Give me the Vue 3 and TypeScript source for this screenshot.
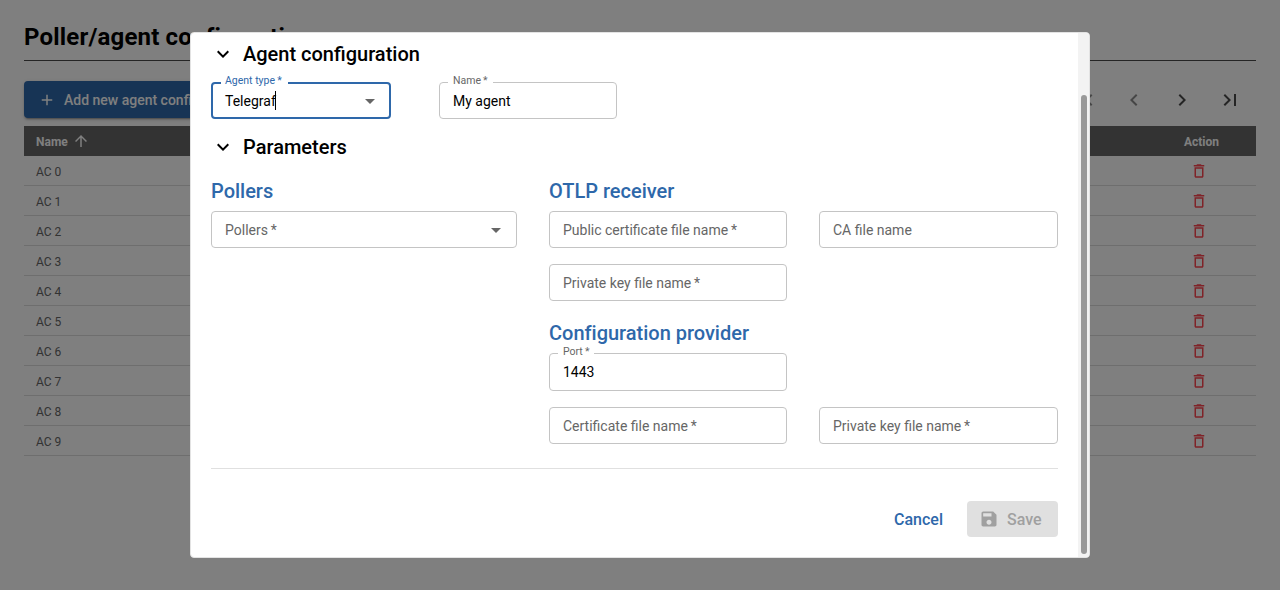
<script setup lang="ts">
interface Row {
  id: number
  name: string
}

const rows: Row[] = Array.from({ length: 10 }, (_, id) => ({ id, name: `AC ${id}` }))
</script>

<template>
  <div class="app">
    <main class="page">
      <h1 class="title">Poller/agent configuration</h1>
      <div class="toolbar">
        <button class="add">
          <svg class="add-icon" viewBox="0 0 24 24"><path d="M19 13h-6v6h-2v-6H5v-2h6V5h2v6h6v2z" /></svg>
          <span>Add new agent configuration</span>
        </button>
        <div class="pager">
          <svg class="off" viewBox="0 0 24 24"><path d="M18.41 16.59L13.82 12l4.59-4.59L17 6l-6 6 6 6zM6 6h2v12H6z" /></svg>
          <svg class="off" viewBox="0 0 24 24"><path d="M15.41 7.41L14 6l-6 6 6 6 1.41-1.41L10.83 12z" /></svg>
          <svg viewBox="0 0 24 24"><path d="M10 6L8.59 7.41 13.17 12l-4.58 4.59L10 18l6-6z" /></svg>
          <svg viewBox="0 0 24 24"><path d="M5.59 7.41L10.18 12l-4.59 4.59L7 18l6-6-6-6zM16 6h2v12h-2z" /></svg>
        </div>
      </div>
      <div class="table">
        <div class="head">
          <span class="sort">
            <span class="label">Name</span>
            <svg viewBox="0 0 24 24"><path d="M4 12l1.41 1.41L11 7.83V20h2V7.83l5.58 5.59L20 12l-8-8-8 8z" /></svg>
          </span>
          <span class="action label">Action</span>
        </div>
        <div v-for="row in rows" :key="row.id" class="row">
          <span class="label">{{ row.name }}</span>
          <span class="action">
            <svg viewBox="0 0 24 24"><path d="M6 19c0 1.1.9 2 2 2h8c1.1 0 2-.9 2-2V7H6v12zM8 9h8v10H8V9zm7.5-5l-1-1h-5l-1 1H5v2h14V4z" /></svg>
          </span>
        </div>
      </div>
    </main>

    <div class="backdrop">
      <section class="modal">
        <div class="content">
          <div class="group">
            <svg class="chevron" viewBox="0 0 24 24"><path d="M7.41 8.59 12 13.17l4.59-4.58L18 10l-6 6-6-6 1.41-1.41z" /></svg>
            <h2>Agent configuration</h2>
          </div>
          <div class="basics">
            <div class="field focused">
              <label class="notch">Agent type<i>*</i></label>
              <span class="value">Telegraf</span><span class="caret"></span>
              <svg class="drop" viewBox="0 0 24 24"><path d="M7 10l5 5 5-5z" /></svg>
            </div>
            <div class="field">
              <label class="notch">Name<i>*</i></label>
              <span class="value">My agent</span>
            </div>
          </div>
          <div class="group second">
            <svg class="chevron" viewBox="0 0 24 24"><path d="M7.41 8.59 12 13.17l4.59-4.58L18 10l-6 6-6-6 1.41-1.41z" /></svg>
            <h2>Parameters</h2>
          </div>
          <div class="params">
            <div>
              <h3>Pollers</h3>
              <div class="field">
                <label>Pollers<i>*</i></label>
                <svg class="drop" viewBox="0 0 24 24"><path d="M7 10l5 5 5-5z" /></svg>
              </div>
            </div>
            <div>
              <h3>OTLP receiver</h3>
              <div class="pair">
                <div class="field"><label>Public certificate file name<i>*</i></label></div>
                <div class="field"><label>CA file name</label></div>
                <div class="field"><label>Private key file name<i>*</i></label></div>
              </div>
              <h3 class="provider">Configuration provider</h3>
              <div class="pair">
                <div class="field port">
                  <label class="notch">Port<i>*</i></label>
                  <span class="value">1443</span>
                </div>
                <div class="field first"><label>Certificate file name<i>*</i></label></div>
                <div class="field"><label>Private key file name<i>*</i></label></div>
              </div>
            </div>
          </div>
          <footer class="footer">
            <button class="cancel">Cancel</button>
            <button class="save" disabled>
              <svg viewBox="0 0 24 24"><path d="M17 3H5c-1.110 0-2 .9-2 2v14c0 1.100.89 2 2 2h14c1.100 0 2-.9 2-2V7l-4-4zm-5 16c-1.660 0-3-1.340-3-3s1.340-3 3-3 3 1.340 3 3-1.340 3-3 3zm3-10H5V5h10v4z" /></svg>
              <span>Save</span>
            </button>
          </footer>
        </div>
        <div class="track"><div class="thumb"></div></div>
      </section>
    </div>
  </div>
</template>

<style>
body {
  margin: 0;
  overflow: hidden;
}
</style>

<style scoped>
* {
  box-sizing: border-box;
}
.app {
  position: relative;
  height: 590px;
  overflow: hidden;
  background: #fff;
  font-family: Roboto, "Liberation Sans", sans-serif;
  color: #000;
}
svg {
  display: block;
  fill: currentColor;
  flex: none;
}
h1,
h2,
h3 {
  margin: 0;
}
i {
  font-style: normal;
  margin-left: 0.2em;
}
button {
  border: 0;
  font-family: inherit;
}
.page {
  padding: 14px 24px 0;
}
.title {
  height: 47px;
  border-bottom: 1px solid #4a4a4a;
  font-size: 24px;
  line-height: 46px;
  font-weight: 700;
  letter-spacing: 0.18px;
}
.toolbar {
  display: flex;
  justify-content: space-between;
  align-items: center;
  margin-top: 20px;
  height: 37px;
}
.add {
  display: flex;
  align-items: center;
  gap: 8px;
  height: 37px;
  padding: 0 16px 0 14px;
  border-radius: 4px;
  background: #2e68aa;
  color: #fff;
  font-size: 14px;
  font-weight: 500;
  box-shadow: 0 3px 1px -2px rgba(0, 0, 0, 0.2), 0 2px 2px rgba(0, 0, 0, 0.14), 0 1px 5px rgba(0, 0, 0, 0.12);
}
.add-icon {
  width: 18px;
  height: 18px;
}
.pager {
  display: flex;
  gap: 24px;
  padding-right: 14px;
  color: #4a4a4a;
}
.pager svg {
  width: 24px;
  height: 24px;
}
.pager .off {
  color: #8c8c8c;
}
.table {
  margin-top: 8px;
  font-size: 12px;
}
.head,
.row {
  display: flex;
  justify-content: space-between;
  align-items: center;
  height: 30px;
  padding: 0 12px;
}
.head {
  background: #666;
  color: #fff;
  font-weight: 700;
}
.sort {
  display: flex;
  align-items: center;
  gap: 4px;
}
.sort svg {
  width: 18px;
  height: 18px;
}
.row {
  border-bottom: 1px solid #dcdcdc;
  color: #666;
}
.label {
  padding-top: 2px;
}
.action {
  display: flex;
  justify-content: center;
  width: 85px;
}
.row .action {
  width: 90px;
  color: #ff4650;
}
.row svg {
  width: 18px;
  height: 18px;
}
.backdrop {
  position: absolute;
  inset: 0;
  display: flex;
  justify-content: center;
  align-items: center;
  background: rgba(0, 0, 0, 0.5);
}
.modal {
  display: flex;
  width: 900px;
  height: 526px;
  border: 1px solid #e3e3e3;
  border-radius: 4px;
  background: #fff;
  overflow: hidden;
}
.content {
  flex: 1;
  padding: 8px 20px 20px;
}
.track {
  width: 11px;
  background: #f3f3f3;
  padding: 62px 2px 0 3px;
}
.thumb {
  height: 459px;
  border-radius: 3px;
  background: #999;
}
.group {
  display: flex;
  align-items: center;
  height: 26px;
}
.group.second {
  margin-top: 15px;
}
.chevron {
  width: 24px;
  height: 24px;
  margin-right: 8px;
}
h2,
h3 {
  font-size: 20px;
  font-weight: 500;
}
.basics {
  display: flex;
  gap: 48px;
  margin-top: 15px;
}
.basics .field {
  width: 178px;
}
.basics .focused {
  width: 180px;
}
.field {
  position: relative;
  display: flex;
  align-items: center;
  height: 37px;
  padding: 0 8px 0 13px;
  border: 1px solid #c4c4c4;
  border-radius: 4px;
  font-size: 14px;
  line-height: 20px;
}
.field label {
  color: #666;
}
.field .notch {
  position: absolute;
  top: -9px;
  left: 8px;
  padding: 0 5px;
  background: #fff;
  font-size: 10.5px;
  line-height: 14px;
}
.field.focused {
  border: 2px solid #2e68aa;
  padding: 0 7px 0 12px;
}
.field.focused .notch {
  top: -10px;
  left: 8px;
  padding: 0 6px 0 4px;
  color: #2e68aa;
}
.caret {
  width: 1px;
  height: 19px;
  margin-left: -1px;
  background: #000;
}
.drop {
  width: 24px;
  height: 24px;
  margin-left: auto;
  color: #666;
}
.params {
  display: grid;
  grid-template-columns: 306px 1fr;
  column-gap: 32px;
  margin-top: 18px;
}
h3 {
  height: 33px;
  line-height: 26px;
  color: #2e68aa;
  letter-spacing: -0.01px;
}
.pair {
  display: grid;
  grid-template-columns: 238px 239px;
  gap: 16px 32px;
}
h3.provider {
  margin-top: 19px;
}
.field.port {
  height: 38px;
}
.field.first {
  grid-column: 1;
}
.footer {
  display: flex;
  justify-content: flex-end;
  gap: 16px;
  margin-top: 24px;
  padding-top: 32px;
  border-top: 1px solid #e0e0e0;
}
.footer button {
  display: flex;
  align-items: center;
  height: 36px;
  border-radius: 4px;
  font-size: 16px;
  font-weight: 500;
}
.cancel {
  padding: 0 8px;
  background: transparent;
  color: #2e68aa;
}
.save {
  width: 91px;
  padding: 0 12px;
  gap: 8px;
  background: #e0e0e0;
  color: #a0a0a0;
}
.save svg {
  width: 20px;
  height: 20px;
}
</style>
